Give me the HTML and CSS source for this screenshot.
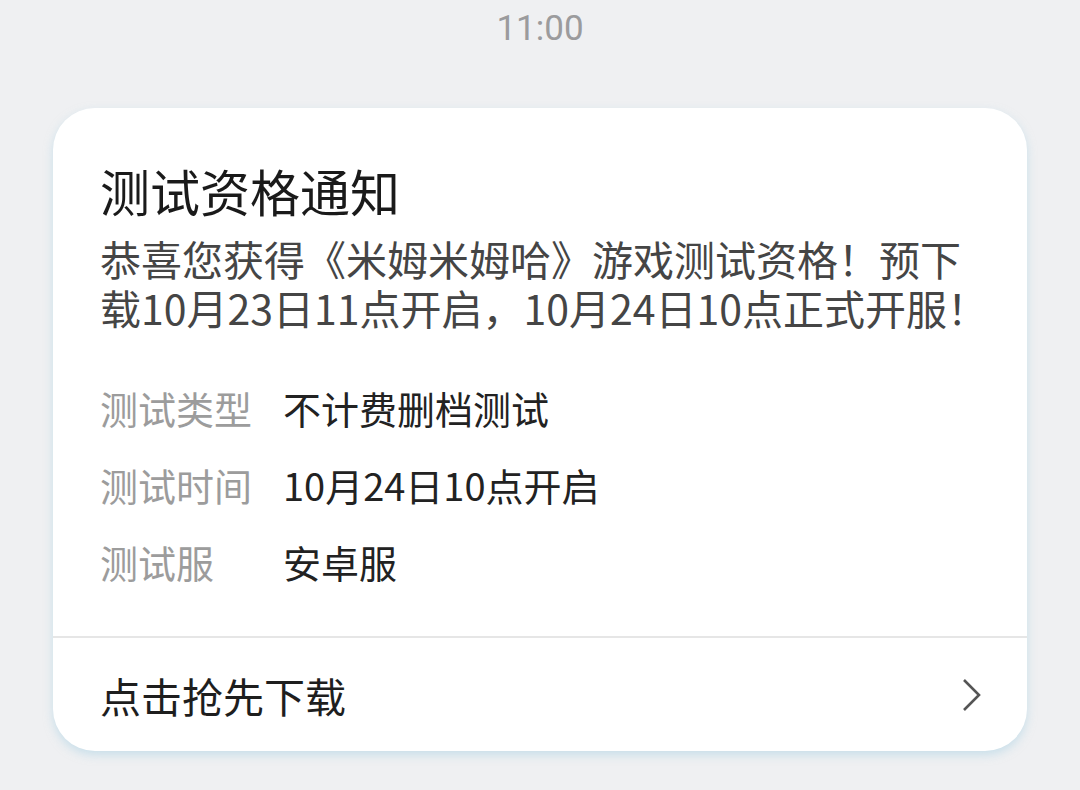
FILE: index.html
```html
<!DOCTYPE html>
<html lang="zh-CN">
<head>
<meta charset="utf-8">
<link rel="stylesheet" href="styles.css">
</head>
<body>
<div class="time">11:00</div>
<div class="card">
  <div class="content">
    <h1 class="title">测试资格通知</h1>
    <p class="desc">恭喜您获得《米姆米姆哈》游戏测试资格！预下载10月23日11点开启，10月24日10点正式开服！</p>
    <div class="info">
      <div class="row"><span class="label">测试类型</span><span class="value">不计费删档测试</span></div>
      <div class="row"><span class="label">测试时间</span><span class="value">10月24日10点开启</span></div>
      <div class="row"><span class="label">测试服</span><span class="value">安卓服</span></div>
    </div>
  </div>
  <div class="footer">
    <span class="action">点击抢先下载</span>
    <svg class="chevron" width="22" height="34" viewBox="0 0 22 34"><path d="M3 2 L18 17 L3 32" fill="none" stroke="#555" stroke-width="2.6"/></svg>
  </div>
</div>
</body>
</html>
```

FILE: styles.css
```css
html, body {
  margin: 0;
  padding: 0;
}
body {
  width: 1080px;
  height: 790px;
  background: #eff0f2;
  font-family: "Noto Sans CJK SC", "Noto Sans", sans-serif;
  overflow: hidden;
}
.time {
  height: 108px;
  text-align: center;
  font-family: "Roboto", "Noto Sans", sans-serif;
  font-size: 35px;
  line-height: 57px;
  color: #9b9b9d;
}
.card {
  margin: 0 53px;
  background: #fff;
  border-radius: 42px;
  box-shadow: 0 4px 10px rgba(170, 210, 228, 0.55);
}
.content {
  padding: 52px 30px 36px 47px;
}
.title {
  margin: 0;
  font-size: 50px;
  font-weight: 400;
  line-height: 60px;
  color: #1a1a1a;
}
.desc {
  margin: 14px 0 0 0;
  font-size: 41px;
  line-height: 49px;
  color: #454545;
}
.info {
  margin-top: 37px;
  display: flex;
  flex-direction: column;
}
.row {
  display: flex;
  height: 77px;
  align-items: center;
  font-size: 38px;
}
.label {
  width: 183px;
  color: #9c9c9c;
}
.value {
  color: #222;
}
.footer {
  border-top: 2px solid #e6e6e6;
  height: 113px;
  display: flex;
  align-items: center;
  justify-content: space-between;
  padding: 0 44px 0 47px;
}
.action {
  font-size: 41px;
  color: #1e1e1e;
}
.chevron {
  display: block;
}
```
